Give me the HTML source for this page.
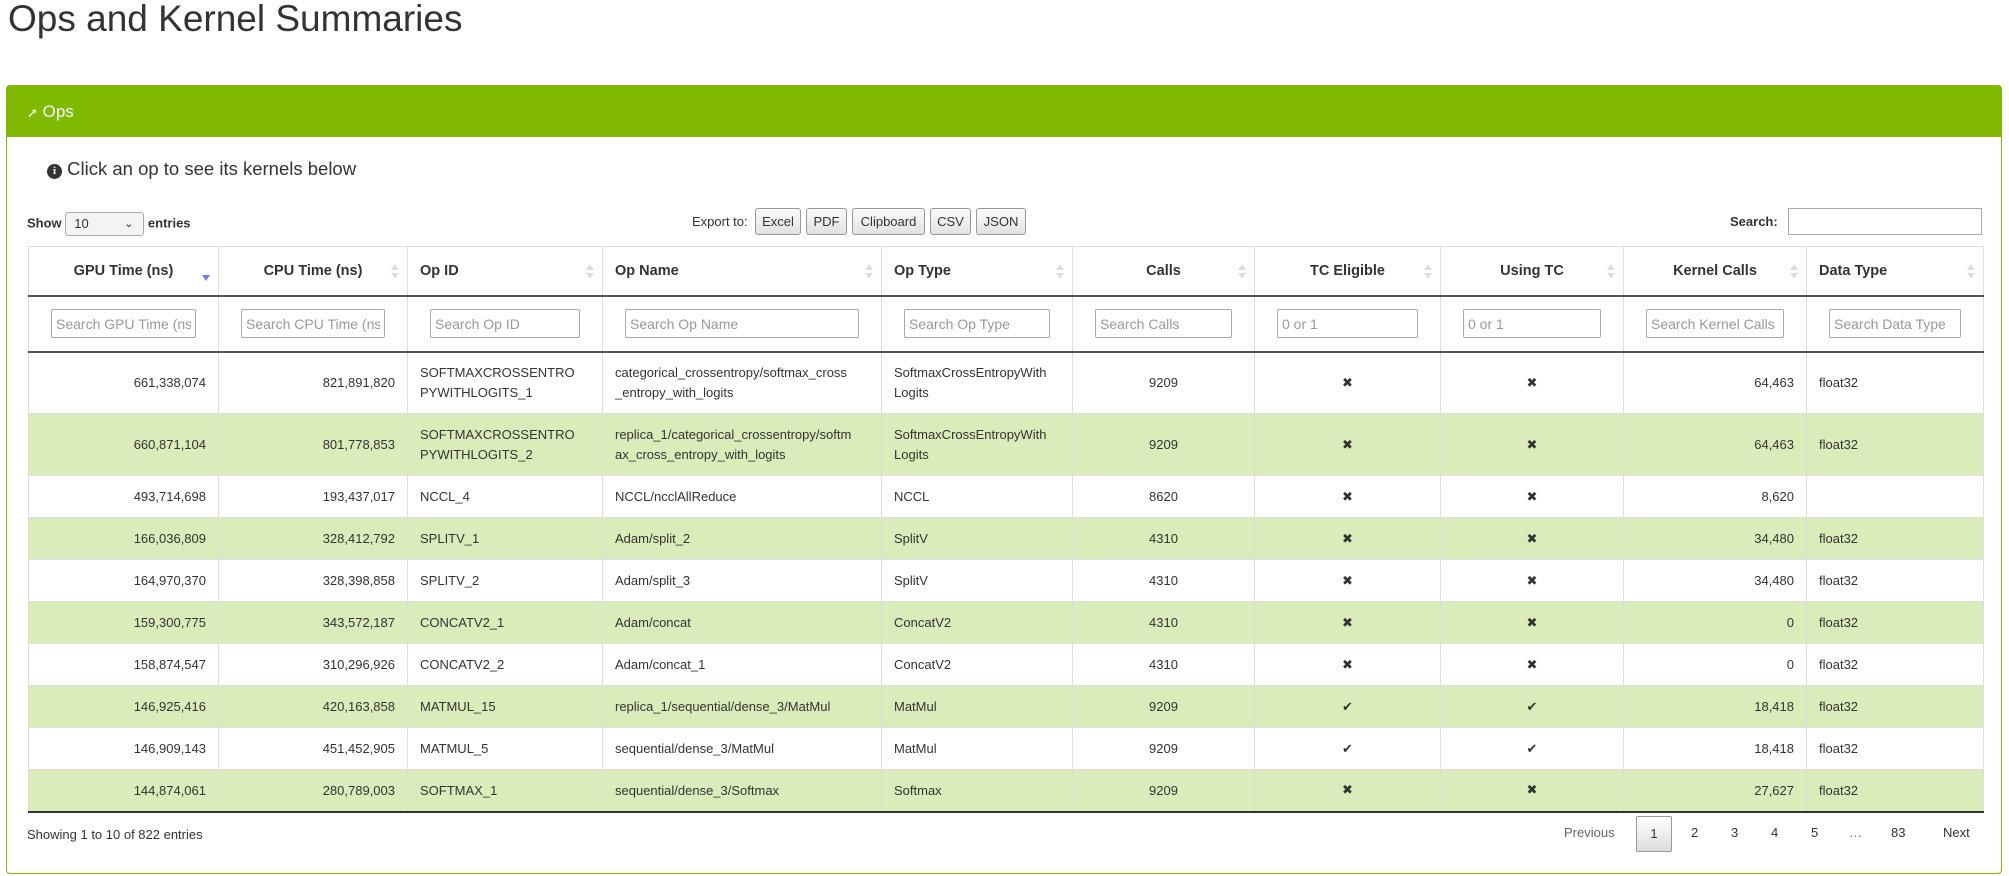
<!DOCTYPE html>
<html><head><meta charset="utf-8"><style>
*{box-sizing:border-box}
body{margin:0;width:2009px;height:876px;background:#fff;font-family:"Liberation Sans",Arial,sans-serif;color:#333;position:relative;overflow:hidden}
h1{position:absolute;left:8px;top:-2px;margin:0;font-size:37px;font-weight:normal;color:#333;letter-spacing:0}
.panel{position:absolute;left:6px;top:85px;width:1996px;height:789px;border:1px solid #7fba00;border-radius:4px}
.ph{height:51px;background:#7fba00;color:#fff;font-size:17px;line-height:51px;padding-left:20px}
.info{position:absolute;left:40px;top:72px;font-size:18.5px;color:#333}
.ab{position:absolute;font-size:13px}
.btn{position:absolute;top:208px;height:27px;border:1px solid #999;border-radius:3px;background:linear-gradient(#fafafa,#e2e2e2);font-size:13px;line-height:25px;text-align:center}
table{position:absolute;left:28px;top:246px;width:1955px;border-collapse:collapse;table-layout:fixed;font-size:13px}
td,th{border:1px solid #ddd;padding:0 12px;vertical-align:middle}
th{height:49px;font-weight:bold;font-size:14.5px;text-align:center;position:relative;border-bottom:2px solid #555}
th.l{text-align:left}
th .s{position:absolute;right:8px;top:17px;width:8px;height:16px}
th .s:before{content:"";position:absolute;left:0;top:0;border-left:4px solid transparent;border-right:4px solid transparent;border-bottom:6px solid #ddd}
th .s:after{content:"";position:absolute;left:0;top:9px;border-left:4px solid transparent;border-right:4px solid transparent;border-top:6px solid #ddd}
th .d:before{display:none}
th .d:after{border-top-color:#6f7fe0;top:11px}
tr.f td{height:56px;text-align:center;border-bottom:2px solid #555;padding:0 22px}
tr.f input{width:100%;height:29px;border:1px solid #aaa;border-radius:2px;font-family:inherit;font-size:14px;padding:0 4px;color:#999}
tr.f input::placeholder{color:#999}
td{height:42px}
tr.t td{height:62px;line-height:20px}
tr.g td{background:#d9ecba}
.r{text-align:right}.c{text-align:center}
tbody tr:last-child td{border-bottom:2px solid #333}
.pg{position:absolute;top:825px;font-size:13px;color:#333}
</style></head><body>
<h1>Ops and Kernel Summaries</h1>
<div class="panel"><div class="ph"><span style="font-size:13px">&#10138;</span> Ops</div>
<div class="info"><span style="display:inline-block;width:15px;height:15px;border-radius:50%;background:#333;color:#fff;font-size:11px;line-height:15px;text-align:center;font-weight:bold;font-family:'Liberation Serif',serif;vertical-align:1px">i</span> Click an op to see its kernels below</div>
</div>
<div class="ab" style="left:27px;top:212px;font-weight:bold">Show <span style="display:inline-block;width:79px;height:24px;border:1px solid #aaa;border-radius:3px;background:#f3f3f3;font-weight:normal;padding-left:8px;line-height:22px;vertical-align:middle;position:relative">10<span style="position:absolute;right:10px;top:0;font-size:11px">&#8964;</span></span> entries</div>
<div class="ab" style="left:692px;top:214px">Export to:</div>
<div class="btn" style="left:755px;width:46px">Excel</div>
<div class="btn" style="left:806px;width:41px">PDF</div>
<div class="btn" style="left:852px;width:73px">Clipboard</div>
<div class="btn" style="left:930px;width:41px">CSV</div>
<div class="btn" style="left:976px;width:50px">JSON</div>
<div class="ab" style="left:1730px;top:214px;font-weight:bold">Search:</div>
<div style="position:absolute;left:1788px;top:208px;width:194px;height:27px;border:1px solid #aaa"></div>
<table>
<colgroup><col style="width:190px"><col style="width:189px"><col style="width:195px"><col style="width:279px"><col style="width:191px"><col style="width:182px"><col style="width:186px"><col style="width:183px"><col style="width:183px"><col style="width:177px"></colgroup>
<thead><tr>
<th>GPU Time (ns)<span class="s d"></span></th><th>CPU Time (ns)<span class="s"></span></th><th class="l">Op ID<span class="s"></span></th><th class="l">Op Name<span class="s"></span></th><th class="l">Op Type<span class="s"></span></th><th>Calls<span class="s"></span></th><th>TC Eligible<span class="s"></span></th><th>Using TC<span class="s"></span></th><th>Kernel Calls<span class="s"></span></th><th class="l">Data Type<span class="s"></span></th>
</tr></thead>
<tbody>
<tr class="f"><td><input placeholder="Search GPU Time (ns)"></td><td><input placeholder="Search CPU Time (ns)"></td><td><input placeholder="Search Op ID"></td><td><input placeholder="Search Op Name"></td><td><input placeholder="Search Op Type"></td><td><input placeholder="Search Calls"></td><td><input placeholder="0 or 1"></td><td><input placeholder="0 or 1"></td><td><input placeholder="Search Kernel Calls"></td><td><input placeholder="Search Data Type"></td></tr>
<tr class="t"><td class="r">661,338,074</td><td class="r">821,891,820</td><td>SOFTMAXCROSSENTRO<br>PYWITHLOGITS_1</td><td>categorical_crossentropy/softmax_cross<br>_entropy_with_logits</td><td>SoftmaxCrossEntropyWith<br>Logits</td><td class="c">9209</td><td class="c">&#10006;</td><td class="c">&#10006;</td><td class="r">64,463</td><td>float32</td></tr>
<tr class="t g"><td class="r">660,871,104</td><td class="r">801,778,853</td><td>SOFTMAXCROSSENTRO<br>PYWITHLOGITS_2</td><td>replica_1/categorical_crossentropy/softm<br>ax_cross_entropy_with_logits</td><td>SoftmaxCrossEntropyWith<br>Logits</td><td class="c">9209</td><td class="c">&#10006;</td><td class="c">&#10006;</td><td class="r">64,463</td><td>float32</td></tr>
<tr><td class="r">493,714,698</td><td class="r">193,437,017</td><td>NCCL_4</td><td>NCCL/ncclAllReduce</td><td>NCCL</td><td class="c">8620</td><td class="c">&#10006;</td><td class="c">&#10006;</td><td class="r">8,620</td><td></td></tr>
<tr class="g"><td class="r">166,036,809</td><td class="r">328,412,792</td><td>SPLITV_1</td><td>Adam/split_2</td><td>SplitV</td><td class="c">4310</td><td class="c">&#10006;</td><td class="c">&#10006;</td><td class="r">34,480</td><td>float32</td></tr>
<tr><td class="r">164,970,370</td><td class="r">328,398,858</td><td>SPLITV_2</td><td>Adam/split_3</td><td>SplitV</td><td class="c">4310</td><td class="c">&#10006;</td><td class="c">&#10006;</td><td class="r">34,480</td><td>float32</td></tr>
<tr class="g"><td class="r">159,300,775</td><td class="r">343,572,187</td><td>CONCATV2_1</td><td>Adam/concat</td><td>ConcatV2</td><td class="c">4310</td><td class="c">&#10006;</td><td class="c">&#10006;</td><td class="r">0</td><td>float32</td></tr>
<tr><td class="r">158,874,547</td><td class="r">310,296,926</td><td>CONCATV2_2</td><td>Adam/concat_1</td><td>ConcatV2</td><td class="c">4310</td><td class="c">&#10006;</td><td class="c">&#10006;</td><td class="r">0</td><td>float32</td></tr>
<tr class="g"><td class="r">146,925,416</td><td class="r">420,163,858</td><td>MATMUL_15</td><td>replica_1/sequential/dense_3/MatMul</td><td>MatMul</td><td class="c">9209</td><td class="c">&#10004;</td><td class="c">&#10004;</td><td class="r">18,418</td><td>float32</td></tr>
<tr><td class="r">146,909,143</td><td class="r">451,452,905</td><td>MATMUL_5</td><td>sequential/dense_3/MatMul</td><td>MatMul</td><td class="c">9209</td><td class="c">&#10004;</td><td class="c">&#10004;</td><td class="r">18,418</td><td>float32</td></tr>
<tr class="g"><td class="r">144,874,061</td><td class="r">280,789,003</td><td>SOFTMAX_1</td><td>sequential/dense_3/Softmax</td><td>Softmax</td><td class="c">9209</td><td class="c">&#10006;</td><td class="c">&#10006;</td><td class="r">27,627</td><td>float32</td></tr>
</tbody></table>
<div class="pg" style="left:27px;top:827px">Showing 1 to 10 of 822 entries</div>
<div class="pg" style="left:1564px;color:#666">Previous</div>
<div style="position:absolute;left:1636px;top:816px;width:36px;height:36px;border:1px solid #999;border-radius:2px;background:linear-gradient(#fff,#ddd);font-size:13px;text-align:center;line-height:34px">1</div>
<div class="pg" style="left:1691px">2</div>
<div class="pg" style="left:1731px">3</div>
<div class="pg" style="left:1771px">4</div>
<div class="pg" style="left:1811px">5</div>
<div class="pg" style="left:1849px;color:#666">…</div>
<div class="pg" style="left:1891px">83</div>
<div class="pg" style="left:1943px">Next</div>
</body></html>
